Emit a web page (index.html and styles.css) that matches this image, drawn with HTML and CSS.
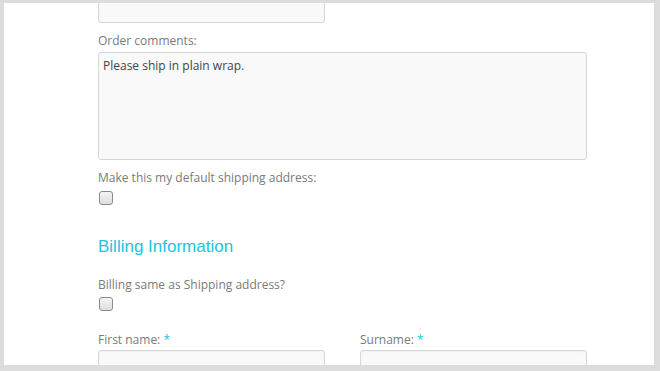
FILE: index.html
```html
<!DOCTYPE html>
<html>
<head>
<meta charset="utf-8">
<link rel="stylesheet" href="styles.css">
</head>
<body>
<div class="frame">
  <div class="form">
    <div class="input input-half input-top"></div>
    <div class="label label-first">Order comments:</div>
    <div class="textarea">Please ship in plain wrap.</div>
    <div class="label">Make this my default shipping address:</div>
    <span class="checkbox"></span>
    <h2 class="heading">Billing Information</h2>
    <div class="label label-after-heading">Billing same as Shipping address?</div>
    <span class="checkbox checkbox-tight"></span>
    <div class="row">
      <div class="col">
        <div class="label label-row">First name: <span class="req">*</span></div>
        <div class="input"></div>
      </div>
      <div class="col">
        <div class="label label-row">Surname: <span class="req">*</span></div>
        <div class="input"></div>
      </div>
    </div>
  </div>
</div>
</body>
</html>
```

FILE: styles.css
```css
html, body {
  margin: 0;
  padding: 0;
  background: #dcdcdc;
  height: 371px;
  overflow: hidden;
}
.frame {
  margin: 3px 6px 0 4px;
  height: 362px;
  background: #ffffff;
  overflow: hidden;
}
.form {
  padding-left: 94px;
  font-family: "Open Sans", "DejaVu Sans", sans-serif;
  font-size: 12px;
  color: #7a7a7a;
}
.input {
  box-sizing: border-box;
  height: 24px;
  border: 1px solid #d6d6d6;
  border-radius: 3px;
  background: #f9f9f9;
  box-shadow: inset 0 1px 2px rgba(0,0,0,0.04);
}
.input-half {
  width: 227px;
}
.input-top {
  margin-top: -4px;
}
.label {
  display: block;
  line-height: 16px;
  margin-top: 10px;
  margin-bottom: 3px;
}
.label-first {
  margin-top: 10px;
}
.textarea {
  box-sizing: border-box;
  width: 489px;
  height: 108px;
  border: 1px solid #d6d6d6;
  border-radius: 3px;
  background: #f9f9f9;
  color: #444;
  padding: 6px 4px;
  line-height: 14px;
}
.checkbox {
  display: block;
  box-sizing: border-box;
  width: 14px;
  height: 14px;
  margin-top: 5px;
  margin-left: 1px;
  border: 1px solid #8a8a8a;
  border-radius: 3px;
  background: linear-gradient(#f4f4f4, #dedede);
}
.checkbox-tight {
  margin-top: 4px;
}
.heading {
  margin: 31px 0 0 0;
  font-family: "Liberation Sans", Arial, sans-serif;
  font-weight: normal;
  font-size: 17px;
  line-height: 22px;
  color: #22c3de;
}
.label-after-heading {
  margin-top: 19px;
}
.row {
  display: grid;
  grid-template-columns: 227px 227px;
  column-gap: 35px;
  margin-top: 21px;
}
.label-row {
  margin-top: 0;
  margin-bottom: 2px;
}
.req {
  color: #22c3de;
}
```
